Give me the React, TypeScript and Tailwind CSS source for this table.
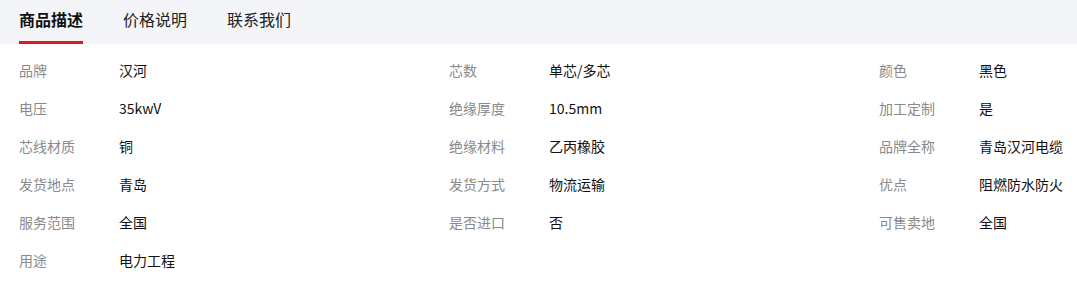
const tabs = ['商品描述', '价格说明', '联系我们']

const rows: [string, string][][] = [
  [['品牌', '汉河'], ['芯数', '单芯/多芯'], ['颜色', '黑色']],
  [['电压', '35kwV'], ['绝缘厚度', '10.5mm'], ['加工定制', '是']],
  [['芯线材质', '铜'], ['绝缘材料', '乙丙橡胶'], ['品牌全称', '青岛汉河电缆']],
  [['发货地点', '青岛'], ['发货方式', '物流运输'], ['优点', '阻燃防水防火']],
  [['服务范围', '全国'], ['是否进口', '否'], ['可售卖地', '全国']],
  [['用途', '电力工程']],
]

export default function App() {
  return (
    <div className="w-[1077px] h-[294px] overflow-hidden bg-white font-['Noto_Sans_CJK_SC',sans-serif]">
      <div className="flex h-[44px] bg-[#f4f5f9] pl-[19px] gap-[40px]">
        {tabs.map((t, i) => (
          <div
            key={t}
            className={
              i === 0
                ? 'relative flex items-start pt-[7px] text-[16px] font-bold text-[#111]'
                : 'relative flex items-start pt-[7px] text-[16px] text-[#222]'
            }
          >
            {t}
            {i === 0 && <div className="absolute left-0 right-0 bottom-0 h-[3px] bg-[#e4161b]" />}
          </div>
        ))}
      </div>
      <div className="pt-[7px]">
        {rows.map((row, ri) => (
          <div key={ri} className="flex h-[38px] items-center text-[14px]">
            {row.map(([k, v]) => (
              <div key={k} className="flex w-[430px] shrink-0 pl-[19px]">
                <span className="w-[100px] shrink-0 text-[#8a8a8a]">{k}</span>
                <span className="text-[#111]">{v}</span>
              </div>
            ))}
          </div>
        ))}
      </div>
    </div>
  )
}
